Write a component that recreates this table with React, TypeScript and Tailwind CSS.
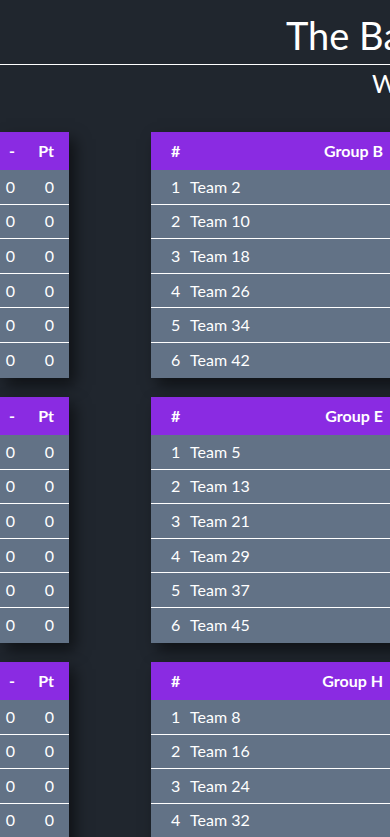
import clsx from "clsx";

type GroupProps = { index: number; side: "left" | "right" };

const GROUPS = ["A", "B", "C", "D", "E", "F", "G", "H"];

// only the columns that fall inside the 390px window are drawn
const GroupTable = ({ index, side }: GroupProps) => {
  const teams = Array.from({ length: 6 }, (_, k) => index + 1 + 8 * k);
  const left = side === "left";
  return (
    <div
      className={clsx(
        "shrink-0 bg-[#627286] shadow-[6px_7px_14px_rgba(0,0,0,0.55)]",
        left ? "w-[69px]" : "w-[260px]",
      )}
    >
      <div className="flex h-[38px] items-center bg-[#8a2be2] font-bold">
        {left ? (
          <>
            <div className="w-[30px] pr-[15px] text-right">-</div>
            <div className="w-[39px] pr-[15px] text-right">Pt</div>
          </>
        ) : (
          <>
            <div className="w-[39px] pl-5">#</div>
            <div className="w-[201px] pr-2 text-right">Group {GROUPS[index]}</div>
          </>
        )}
      </div>
      {teams.map((team, i) => (
        <div
          key={team}
          className={clsx("flex h-[34.6px] items-center", {
            "border-b border-white": i < teams.length - 1,
          })}
        >
          {left ? (
            <>
              <div className="w-[30px] pr-[15px] text-right">0</div>
              <div className="w-[39px] pr-[15px] text-right">0</div>
            </>
          ) : (
            <>
              <div className="w-[39px] pl-5">{i + 1}</div>
              <div className="w-[201px]">Team {team}</div>
            </>
          )}
        </div>
      ))}
    </div>
  );
};

export default function App() {
  return (
    <div className="h-[837px] w-[390px] overflow-hidden bg-[#20262e] font-['Lato',sans-serif] text-[16px] text-white">
      <div className="border-b border-white pt-4 pb-[10px] pl-[286px]">
        <h1 className="whitespace-nowrap text-[38px] leading-[38px]">The Ba</h1>
      </div>
      <div className="mt-[6px] whitespace-nowrap pl-[372px] text-[25px] leading-[25px]">W</div>
      <div className="mt-[36px] flex gap-[82px]">
        <div className="flex w-[69px] shrink-0 flex-col gap-[19.4px]">
          {[0, 3, 6].map((g) => (
            <GroupTable key={g} index={g} side="left" />
          ))}
        </div>
        <div className="flex shrink-0 flex-col gap-[19.4px]">
          {[1, 4, 7].map((g) => (
            <GroupTable key={g} index={g} side="right" />
          ))}
        </div>
      </div>
    </div>
  );
}
